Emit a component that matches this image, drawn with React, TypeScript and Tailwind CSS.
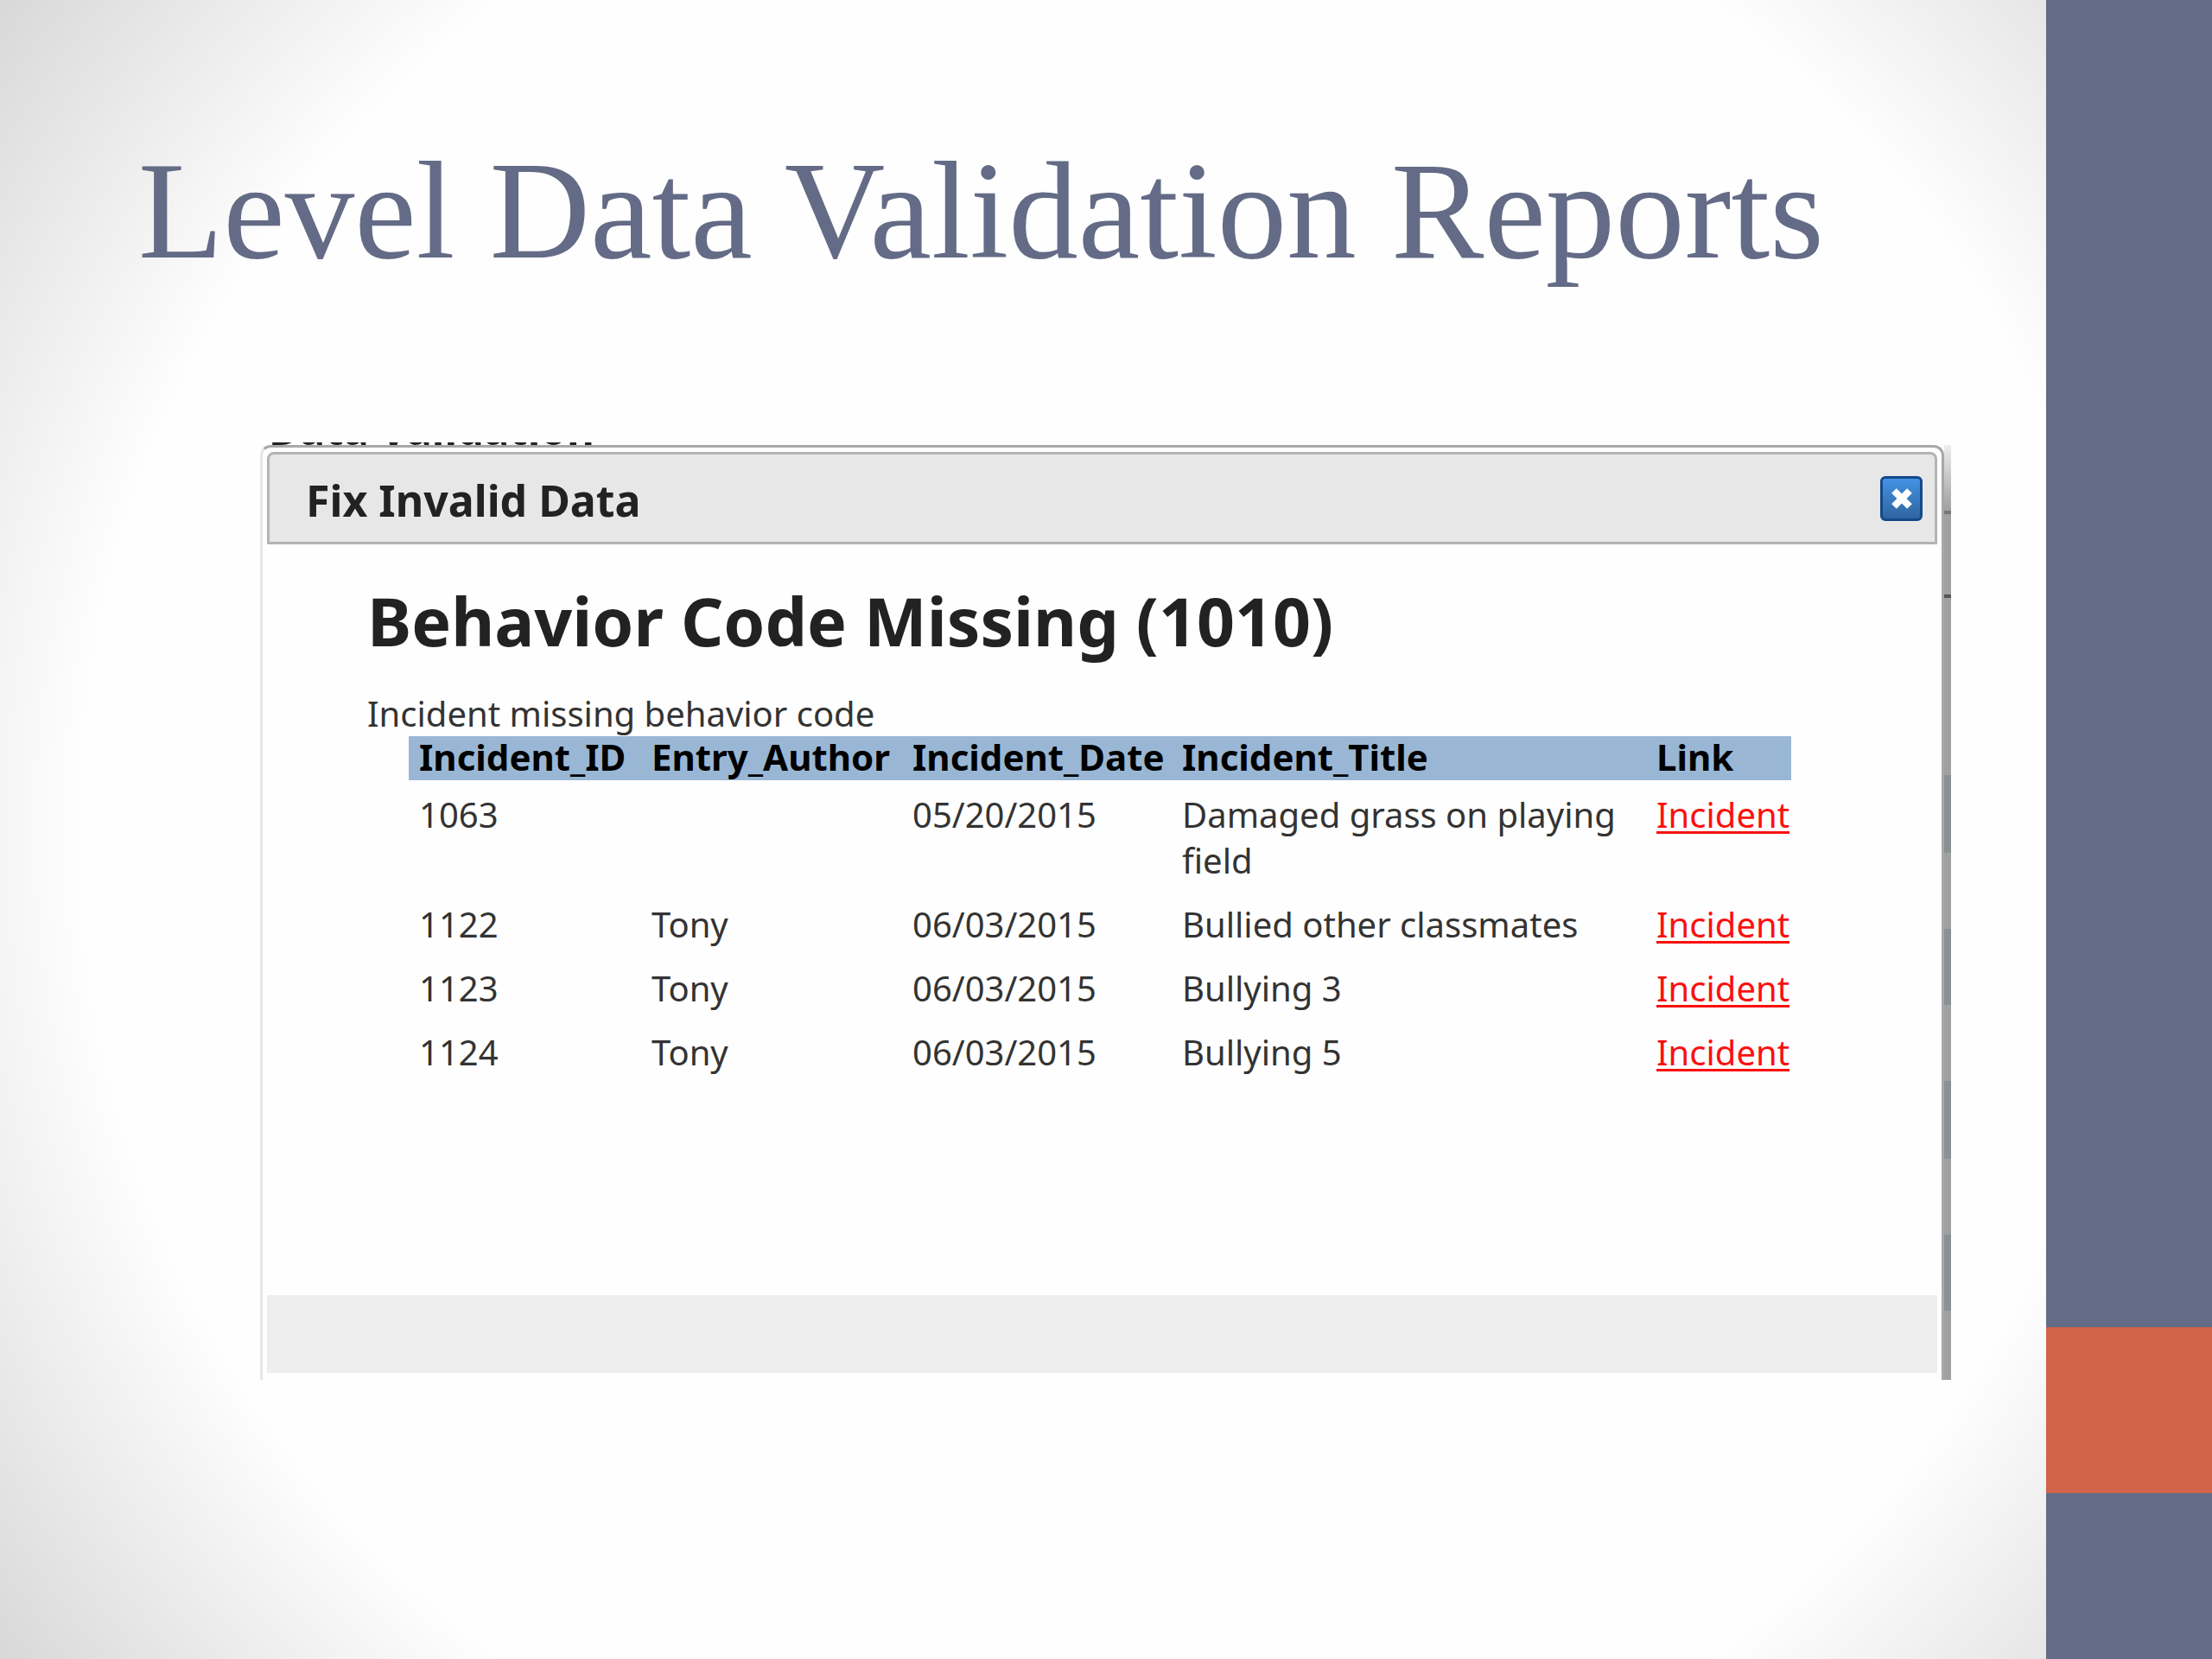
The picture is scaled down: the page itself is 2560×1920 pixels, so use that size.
const columns = ["Incident_ID", "Entry_Author", "Incident_Date", "Incident_Title", "Link"];

const incidents = [
  { id: "1063", author: "", date: "05/20/2015", title: "Damaged grass on playing field" },
  { id: "1122", author: "Tony", date: "06/03/2015", title: "Bullied other classmates" },
  { id: "1123", author: "Tony", date: "06/03/2015", title: "Bullying 3" },
  { id: "1124", author: "Tony", date: "06/03/2015", title: "Bullying 5" },
];

const IncidentTable = () => (
  <table className="ml-12 w-[1600px] table-fixed text-left text-[40px] leading-[53px] text-[#333333]">
    <colgroup>
      <col className="w-[269px]" />
      <col className="w-[302px]" />
      <col className="w-[312px]" />
      <col className="w-[549px]" />
      <col />
    </colgroup>
    <thead>
      <tr className="bg-[#99b7d5] text-[42px] leading-[48px] text-black">
        {columns.map((column) => (
          <th key={column} className="pb-[3px] pl-3 font-bold whitespace-nowrap">
            {column}
          </th>
        ))}
      </tr>
    </thead>
    <tbody>
      {incidents.map(({ id, author, date, title }) => (
        <tr key={id} className="align-top">
          <td className="pt-[13px] pb-2 pl-3">{id}</td>
          <td className="pt-[13px] pb-2 pl-3">{author}</td>
          <td className="pt-[13px] pb-2 pl-3">{date}</td>
          <td className="pt-[13px] pr-6 pb-2 pl-3">{title}</td>
          <td className="pt-[13px] pb-2 pl-3">
            <a href="#" className="text-[#fb1010] underline decoration-3 underline-offset-4">
              Incident
            </a>
          </td>
        </tr>
      ))}
    </tbody>
  </table>
);

// the part of the page behind the dialog that is still visible on its right
const PageEdge = () => (
  <div className="flex w-2 flex-col bg-[#a0a0a0]">
    <div className="h-[76px] bg-linear-to-b from-[#eeeeee] to-[#a0a0a0]" />
    <div className="h-1 bg-[#777777]" />
    <div className="h-[93px]" />
    <div className="h-1 bg-[#555555]" />
    <div className="h-[205px]" />
    <div className="h-[90px] bg-[#8a9194]" />
    <div className="h-[88px]" />
    <div className="h-[88px] bg-[#8a9194]" />
    <div className="h-[88px]" />
    <div className="h-[90px] bg-[#8a9194]" />
    <div className="h-[88px]" />
    <div className="h-[88px] bg-[#8a9194]" />
  </div>
);

const Dialog = () => (
  <section className="flex h-[1082px]">
    <div className="flex grow flex-col rounded-t-xl border-t-3 border-r-3 border-l-3 border-t-[#a8a8a8] border-r-[#a8a8a8] border-l-[#e6e6e6] bg-[#fefefe] p-[5px] pb-2">
      <header className="flex h-[107px] items-center justify-between rounded-t-lg border-3 border-[#b4b4b4] bg-[#e7e7e7] pr-[14px] pl-[42px]">
        <h2 className="pt-1 text-[50px] leading-[60px] font-bold">Fix Invalid Data</h2>
        <button
          aria-label="Close"
          className="flex h-[52px] w-[49px] items-center justify-center rounded-md border-3 border-[#14488a] bg-linear-to-b from-[#4492e4] to-[#2f659f]"
        >
          <svg viewBox="0 0 24 24" className="size-6" stroke="white" strokeWidth="8">
            <path d="M3 3 21 21M21 3 3 21" />
          </svg>
        </button>
      </header>
      <div className="grow px-[116px] pt-[41px]">
        <h3 className="text-[77px] leading-[96px] font-bold">Behavior Code Missing (1010)</h3>
        <p className="mt-8 text-[40px] leading-[53px] text-[#333333]">
          Incident missing behavior code
        </p>
        <IncidentTable />
      </div>
      <footer className="h-[90px] bg-[#eeeeee]" />
    </div>
    <PageEdge />
  </section>
);

const App = () => {
  return (
    <div className="flex min-h-screen bg-[radial-gradient(circle_at_center,#fefefe_74%,#d8d8d8_100%)]">
      <main className="grow pt-[149px] pr-[110px] pl-[160px]">
        <h1 className="font-['Liberation_Serif',serif] text-[161px] leading-[190px] whitespace-nowrap text-[#646b86]">
          Level Data Validation Reports
        </h1>
        <div className="mt-[173px] pl-[141px] font-['Noto_Sans',sans-serif] text-[#222222]">
          {/* only the feet of the page heading show above the dialog */}
          <div className="flex h-[3px] items-end overflow-hidden pl-[10px]">
            <span className="text-[49px] leading-[38px] font-bold">Data Validation</span>
          </div>
          <Dialog />
        </div>
      </main>
      <aside className="flex w-[192px] shrink-0 flex-col bg-[#646b86]">
        <div className="grow" />
        <div className="h-[192px] bg-[#d16349]" />
        <div className="h-[192px]" />
      </aside>
    </div>
  );
};

export default App;
